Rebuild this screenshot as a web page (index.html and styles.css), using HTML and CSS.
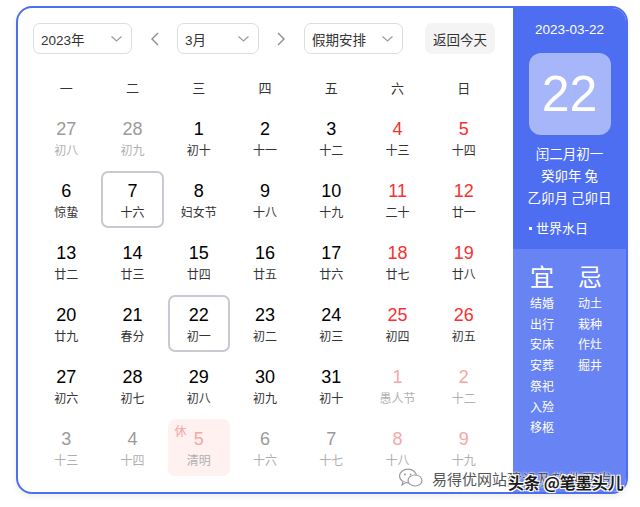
FILE: index.html
```html
<!DOCTYPE html>
<html lang="zh">
<head>
<meta charset="utf-8">
<title>万年历</title>
<link rel="stylesheet" href="styles.css">
</head>
<body>
<div class="page">
  <div class="cal">
    <div class="main">
      <div class="toolbar">
        <div class="select w-year"><span>2023年</span><svg class="chev" width="11" height="6" viewBox="0 0 11 6"><polyline points="0.5,0.5 5.5,5 10.5,0.5"/></svg></div>
        <div class="arrow"><svg width="9" height="14" viewBox="0 0 9 14"><polyline points="8,1 2,7 8,13"/></svg></div>
        <div class="select w-month"><span>3月</span><svg class="chev" width="11" height="6" viewBox="0 0 11 6"><polyline points="0.5,0.5 5.5,5 10.5,0.5"/></svg></div>
        <div class="arrow"><svg width="9" height="14" viewBox="0 0 9 14"><polyline points="1,1 7,7 1,13"/></svg></div>
        <div class="select w-hol"><span>假期安排</span><svg class="chev" width="11" height="6" viewBox="0 0 11 6"><polyline points="0.5,0.5 5.5,5 10.5,0.5"/></svg></div>
        <div class="today-btn">返回今天</div>
      </div>
      <div class="weekdays">
        <span>一</span><span>二</span><span>三</span><span>四</span><span>五</span><span>六</span><span>日</span>
      </div>
      <div class="days">
        <div class="day other"><span class="num">27</span><span class="lunar">初八</span></div>
        <div class="day other"><span class="num">28</span><span class="lunar">初九</span></div>
        <div class="day"><span class="num">1</span><span class="lunar">初十</span></div>
        <div class="day"><span class="num">2</span><span class="lunar">十一</span></div>
        <div class="day"><span class="num">3</span><span class="lunar">十二</span></div>
        <div class="day wkend"><span class="num">4</span><span class="lunar">十三</span></div>
        <div class="day wkend"><span class="num">5</span><span class="lunar">十四</span></div>

        <div class="day"><span class="num">6</span><span class="lunar">惊蛰</span></div>
        <div class="day sel"><span class="num">7</span><span class="lunar">十六</span></div>
        <div class="day"><span class="num">8</span><span class="lunar">妇女节</span></div>
        <div class="day"><span class="num">9</span><span class="lunar">十八</span></div>
        <div class="day"><span class="num">10</span><span class="lunar">十九</span></div>
        <div class="day wkend"><span class="num">11</span><span class="lunar">二十</span></div>
        <div class="day wkend"><span class="num">12</span><span class="lunar">廿一</span></div>

        <div class="day"><span class="num">13</span><span class="lunar">廿二</span></div>
        <div class="day"><span class="num">14</span><span class="lunar">廿三</span></div>
        <div class="day"><span class="num">15</span><span class="lunar">廿四</span></div>
        <div class="day"><span class="num">16</span><span class="lunar">廿五</span></div>
        <div class="day"><span class="num">17</span><span class="lunar">廿六</span></div>
        <div class="day wkend"><span class="num">18</span><span class="lunar">廿七</span></div>
        <div class="day wkend"><span class="num">19</span><span class="lunar">廿八</span></div>

        <div class="day"><span class="num">20</span><span class="lunar">廿九</span></div>
        <div class="day"><span class="num">21</span><span class="lunar">春分</span></div>
        <div class="day sel"><span class="num">22</span><span class="lunar">初一</span></div>
        <div class="day"><span class="num">23</span><span class="lunar">初二</span></div>
        <div class="day"><span class="num">24</span><span class="lunar">初三</span></div>
        <div class="day wkend"><span class="num">25</span><span class="lunar">初四</span></div>
        <div class="day wkend"><span class="num">26</span><span class="lunar">初五</span></div>

        <div class="day"><span class="num">27</span><span class="lunar">初六</span></div>
        <div class="day"><span class="num">28</span><span class="lunar">初七</span></div>
        <div class="day"><span class="num">29</span><span class="lunar">初八</span></div>
        <div class="day"><span class="num">30</span><span class="lunar">初九</span></div>
        <div class="day"><span class="num">31</span><span class="lunar">初十</span></div>
        <div class="day other wkend"><span class="num">1</span><span class="lunar">愚人节</span></div>
        <div class="day other wkend"><span class="num">2</span><span class="lunar">十二</span></div>

        <div class="day other"><span class="num">3</span><span class="lunar">十三</span></div>
        <div class="day other"><span class="num">4</span><span class="lunar">十四</span></div>
        <div class="day other holiday"><span class="rest">休</span><span class="num">5</span><span class="lunar">清明</span></div>
        <div class="day other"><span class="num">6</span><span class="lunar">十六</span></div>
        <div class="day other"><span class="num">7</span><span class="lunar">十七</span></div>
        <div class="day other wkend"><span class="num">8</span><span class="lunar">十八</span></div>
        <div class="day other wkend"><span class="num">9</span><span class="lunar">十九</span></div>
      </div>
    </div>
    <aside class="side">
      <div class="side-top">
        <div class="side-date">2023-03-22</div>
        <div class="big">22</div>
        <div class="info">
          <div>闰二月初一</div>
          <div>癸卯年 兔</div>
          <div>乙卯月 己卯日</div>
        </div>
        <div class="fest"><span class="bullet"></span>世界水日</div>
      </div>
      <div class="side-bottom">
        <div class="col">
          <div class="head">宜</div>
          <div>结婚</div><div>出行</div><div>安床</div><div>安葬</div><div>祭祀</div><div>入殓</div><div>移柩</div>
        </div>
        <div class="col">
          <div class="head">忌</div>
          <div>动土</div><div>栽种</div><div>作灶</div><div>掘井</div>
        </div>
      </div>
    </aside>
  </div>
  <div class="watermark">
    <svg class="wx" width="26" height="20" viewBox="0 0 26 20"><ellipse cx="10" cy="8" rx="8.5" ry="6.8"/><path d="M5 13.5 L4 17 L8 14.6"/><ellipse cx="17" cy="12.5" rx="7" ry="5.5"/><circle cx="7" cy="6.5" r="0.9" class="dot"/><circle cx="12.5" cy="6.5" r="0.9" class="dot"/></svg>
    <span class="wm1">易得优网站建设及软件开发</span>
    <span class="wm2">头条 @笔墨头儿</span>
  </div>
</div>
</body>
</html>
```

FILE: styles.css
```css
* { box-sizing: border-box; }
html, body { margin: 0; padding: 0; background: #fff; }
body {
  font-family: "Liberation Sans", "Noto Sans CJK SC", sans-serif;
  color: #333;
}
.page {
  position: relative;
  width: 640px;
  height: 507px;
  padding: 6px 0 0 16px;
}
.cal {
  width: 612px;
  height: 488px;
  border: 2px solid #4e6ef2;
  border-radius: 16px;
  overflow: hidden;
  display: flex;
  background: #fff;
  box-shadow: 0 3px 6px rgba(0, 0, 0, 0.07);
}
.main {
  width: 495px;
  padding: 15px 16px 0 15px;
}
.toolbar {
  display: flex;
  align-items: center;
  height: 31px;
}
.select {
  height: 31px;
  border: 1px solid #dcdde3;
  border-radius: 7px;
  display: flex;
  align-items: center;
  justify-content: space-between;
  padding: 0 9px 0 7px;
  font-size: 13.5px;
  color: #333;
}
.w-year { width: 99px; }
.w-month { width: 82px; }
.w-hol { width: 99px; }
.chev polyline {
  fill: none;
  stroke: #9a9aa2;
  stroke-width: 1.2;
}
.arrow {
  width: 45px;
  display: flex;
  justify-content: center;
  align-items: center;
}
.arrow polyline {
  fill: none;
  stroke: #8a8a90;
  stroke-width: 1.4;
}
.today-btn {
  margin-left: 22px;
  width: 70px;
  height: 31px;
  border-radius: 7px;
  background: #f4f4f5;
  display: flex;
  align-items: center;
  justify-content: center;
  font-size: 13.5px;
  color: #333;
}
.weekdays {
  margin-top: 20px;
  height: 26px;
  display: grid;
  grid-template-columns: repeat(7, 1fr);
  width: 464px;
  align-items: center;
  font-size: 13px;
  color: #333;
  text-align: center;
  font-family: "Noto Sans CJK SC", sans-serif;
}
.days {
  margin-top: 9px;
  width: 464px;
  display: grid;
  grid-template-columns: repeat(7, 1fr);
  grid-auto-rows: 57px;
  row-gap: 5px;
}
.day {
  position: relative;
  margin: 0 2px;
  border-radius: 7px;
  display: flex;
  flex-direction: column;
  align-items: center;
  border: 2px solid transparent;
  padding-top: 7px;
}
.num {
  font-size: 18px;
  line-height: 22px;
  color: #000;
}
.lunar {
  margin-top: 2px;
  font-size: 12px;
  line-height: 16px;
  color: #333;
  font-family: "Noto Sans CJK SC", sans-serif;
}
.wkend .num { color: #f73131; }
.other .num { color: #9a9a9a; }
.other .lunar { color: #b0b0b0; }
.other.wkend .num { color: #f7a6a6; }
.sel { border-color: #c8c9d1; }
.holiday { background: #fff1f0; }
.holiday .num { color: #f7a6a6; }
.rest {
  position: absolute;
  left: 5px;
  top: 3px;
  font-size: 12px;
  line-height: 14px;
  color: #f5a2a2;
  font-family: "Noto Sans CJK SC", sans-serif;
}
.side {
  width: 113px;
  display: flex;
  flex-direction: column;
  color: #fff;
  font-family: "Noto Sans CJK SC", sans-serif;
}
.side-top {
  height: 241px;
  background: #4e6ef2;
  display: flex;
  flex-direction: column;
  align-items: center;
  padding-top: 12px;
}
.side-date {
  font-family: "Liberation Sans", sans-serif;
  font-size: 13.5px;
  line-height: 20px;
}
.big {
  margin-top: 13px;
  width: 82px;
  height: 82px;
  border-radius: 12px;
  background: #a6b6f8;
  display: flex;
  align-items: center;
  justify-content: center;
  font-family: "Liberation Sans", sans-serif;
  font-size: 50px;
  line-height: 1;
}
.info {
  margin-top: 7px;
  font-size: 13.5px;
  line-height: 22px;
  text-align: center;
}
.fest {
  margin-top: 9px;
  align-self: flex-start;
  padding-left: 16px;
  font-size: 13px;
  line-height: 22px;
  display: flex;
  align-items: center;
}
.bullet {
  width: 3px;
  height: 3px;
  background: #fff;
  margin-right: 4px;
}
.side-bottom {
  flex: 1;
  background: #6883f4;
  display: flex;
  padding: 9px 0 0 17px;
}
.col {
  width: 59px;
  font-size: 12px;
  line-height: 20.7px;
}
.col .head {
  font-size: 24px;
  line-height: 35px;
}
.watermark {
  position: absolute;
  left: 398px;
  top: 466px;
  height: 24px;
  display: flex;
  align-items: center;
}
.wx ellipse, .wx path {
  fill: #fff;
  stroke: #9a9a9a;
  stroke-width: 1.2;
}
.wx .dot { fill: #9a9a9a; }
.wm1 {
  margin-left: 8px;
  font-family: "Noto Sans CJK SC", sans-serif;
  font-size: 15px;
  color: #555;
  text-shadow: 0 0 2px #fff, 0 0 2px #fff;
}
.wm2 {
  position: absolute;
  left: 110px;
  top: 4px;
  white-space: nowrap;
  font-family: "Noto Sans CJK SC", sans-serif;
  font-size: 16px;
  font-weight: 700;
  color: #1a1a1a;
  text-shadow: 1px 1px 0 #fff, -1px -1px 0 #fff, 1px -1px 0 #fff, -1px 1px 0 #fff;
}
```
